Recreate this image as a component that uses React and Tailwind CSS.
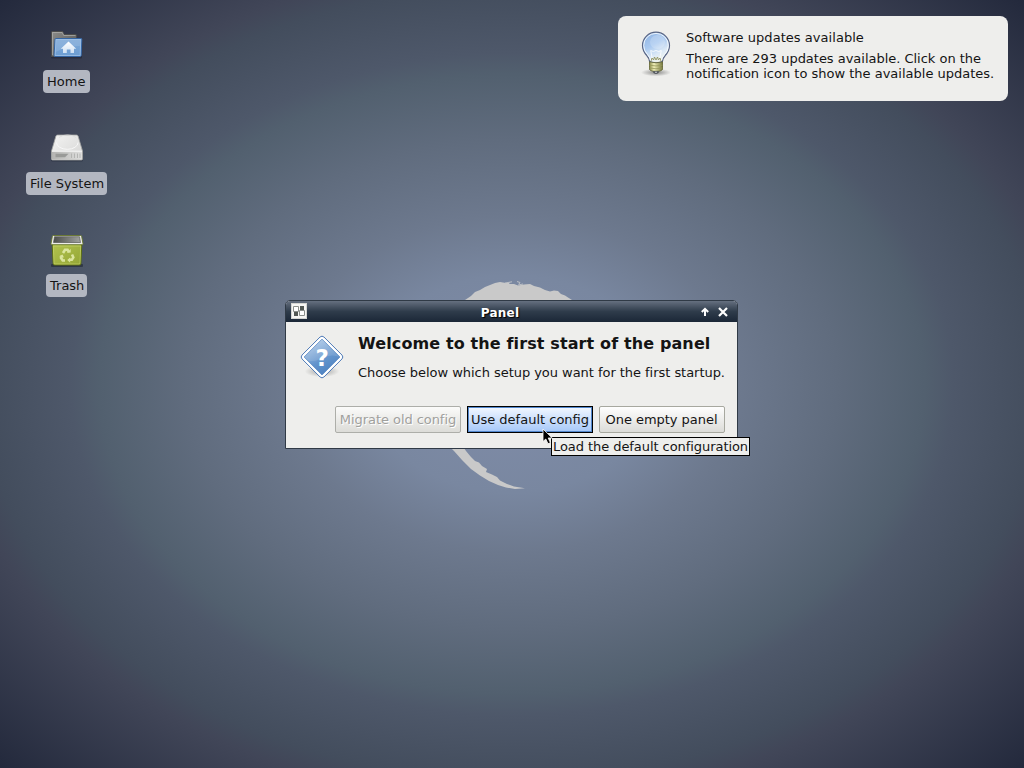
import React from "react";

function HomeIcon() {
  return (
    <svg width="36" height="32" viewBox="0 0 36 32" className="block">
      <defs>
        <linearGradient id="hBack" x1="0" x2="1" y1="0" y2="1">
          <stop offset="0" stopColor="#8c8c8a" />
          <stop offset="1" stopColor="#4f4f4d" />
        </linearGradient>
        <linearGradient id="hFront" x1="0" x2="0" y1="0" y2="1">
          <stop offset="0" stopColor="#7fa9d8" />
          <stop offset="1" stopColor="#6c9dd2" />
        </linearGradient>
        <linearGradient id="hHouse" x1="0" x2="0" y1="0" y2="1">
          <stop offset="0" stopColor="#ffffff" />
          <stop offset="1" stopColor="#cfe0f3" />
        </linearGradient>
      </defs>
      <rect x="2" y="27" width="31" height="2.500" rx="1" fill="#1b2030" opacity=".5" />
      <path d="M2.500 27.500V3.500q0-1 1-1H13q1 0 1.300 1l.8 2h11.400q1 0 1 1v21z" fill="url(#hBack)" stroke="#4c4c4b" />
      <path d="M3.500 26V3.500h9.700l1.500 3h11.800" fill="none" stroke="#b0b0ae" opacity=".7" />
      <path d="M6.800 9.500h25.400q.6 0 .6.700L32.200 26.500q-.1 1-1.200 1H6q-1 0-.9-1L6 10.200q.1-.7.800-.7z" fill="url(#hFront)" stroke="#3566a4" />
      <path d="M7 10.500h24.700L31.200 26.500H6.100z" fill="none" stroke="#b4d0ee" opacity=".55" />
      <path d="M7.500 11h23.700l-.3 6Q16 17 6.800 23z" fill="#fff" opacity=".12" />
      <path d="M19.500 12.500l7.700 7.200h-2.200v4.300h-3.500v-3.500h-3.700v3.500h-3.800v-4.300h-2.200z" fill="url(#hHouse)" />
    </svg>
  );
}

function DriveIcon() {
  return (
    <svg width="36" height="30" viewBox="0 0 36 30" className="block">
      <defs>
        <linearGradient id="dTop" x1="0" x2="1" y1="0" y2="1">
          <stop offset="0" stopColor="#f4f4f3" />
          <stop offset="1" stopColor="#d4d4d3" />
        </linearGradient>
        <linearGradient id="dSide" x1="0" x2="1">
          <stop offset="0" stopColor="#b4b4b2" />
          <stop offset="1" stopColor="#dededd" />
        </linearGradient>
      </defs>
      <rect x="2" y="25.500" width="32" height="3" rx="1.500" fill="#181d2c" opacity=".4" />
      <path d="M8.500 2h19q1.200 0 1.600 1.200L33.500 18v8q0 1-1 1h-29q-1 0-1-1V18L6.900 3.200Q7.300 2 8.500 2z" fill="url(#dTop)" stroke="#a3a4a2" strokeWidth=".8" />
      <path d="M3 18.500h30V25.500q0 1-1 1H4q-1 0-1-1z" fill="url(#dSide)" />
      <path d="M3 18.200h30" stroke="#fff" strokeWidth=".8" />
      <path d="M7.500 9.500a10.800 6.800 0 0 0 21.600 0" fill="none" stroke="#f8f8f8" strokeWidth="1" />
      <path d="M10 4.500a11 7 0 0 1 17 0" fill="none" stroke="#dcdcdb" strokeWidth=".8" />
      <path d="M6.500 20.800h13l-3.500 3.400H6.500z" fill="#999a98" />
      <path d="M22.500 20.500v4.500M25.500 20.500v4.500M28.500 20.500v4.500M31 20.500v4.500" stroke="#b4b5b3" />
    </svg>
  );
}

function TrashIcon() {
  return (
    <svg width="36" height="34" viewBox="0 0 36 34" className="block">
      <defs>
        <linearGradient id="tBody" x1="0" x2="1" y1="0" y2="1">
          <stop offset="0" stopColor="#b3c44f" />
          <stop offset="1" stopColor="#93a535" />
        </linearGradient>
        <linearGradient id="tIn" x1="0" x2="1">
          <stop offset="0" stopColor="#4c4e4c" />
          <stop offset="1" stopColor="#a0a29f" />
        </linearGradient>
      </defs>
      <rect x="2" y="30" width="32" height="3" rx="1" fill="#151b25" opacity=".5" />
      <path d="M3.200 9h29.600l-.9 20.500q-.1 1.500-1.500 1.500H5.600q-1.400 0-1.500-1.500z" fill="url(#tBody)" stroke="#5c6d13" />
      <path d="M4.300 12h27.400l-.7 17q-.1 1-1 1H6q-1 0-1-1z" fill="none" stroke="#cbd86f" opacity=".6" />
      <path d="M4.300 1.500h27.400q.7 0 .9.700l1.400 7.600q.1.900-.8.900H2.800q-1 0-.8-.9l1.400-7.600q.2-.7.900-.7z" fill="#ecece9" stroke="#65752a" strokeWidth=".9" />
      <path d="M5.500 2.700h25l1 5.800H4.500z" fill="url(#tIn)" stroke="#464846" strokeWidth=".6" />
      <g fill="none" stroke="#dbe59e" strokeWidth="2.600">
        <path d="M14 19l2-3.200h2.600l1.200 2" />
        <path d="M23 20.500l1.300 2.800-1.500 2.500h-2.500" />
        <path d="M16 26.500h-2.300l-1.700-2.500.9-1.800" />
      </g>
      <path d="M18 19l3.700-.5V14.800zM21.200 23.500v5.300l-3-2.700zM10 22.200l3.500-1.700 1.500 3z" fill="#dbe59e" />
    </svg>
  );
}

function BulbIcon() {
  return (
    <svg width="36" height="48" viewBox="0 0 36 48" className="block">
      <defs>
        <linearGradient id="bGlass" x1=".1" x2=".6" y1="0" y2="1">
          <stop offset="0" stopColor="#8fb3e2" />
          <stop offset=".45" stopColor="#a9c9f0" />
          <stop offset=".75" stopColor="#dce9f6" />
          <stop offset="1" stopColor="#f2f4ea" />
        </linearGradient>
        <radialGradient id="bShade">
          <stop offset="0" stopColor="#555" stopOpacity=".65" />
          <stop offset="1" stopColor="#555" stopOpacity="0" />
        </radialGradient>
        <linearGradient id="bBase" x1="0" x2="1">
          <stop offset="0" stopColor="#8b8c4c" />
          <stop offset=".35" stopColor="#f0efb8" />
          <stop offset="1" stopColor="#74763c" />
        </linearGradient>
      </defs>
      <ellipse cx="18" cy="42.500" rx="15" ry="3.800" fill="url(#bShade)" />
      <path d="M11.600 31.500q-.2-3-2.800-6Q4.500 21 4.500 15.500a13.500 13.300 0 0 1 27 0q0 5.500-4.300 10-2.600 3-2.800 6-6.400 2.500-12.800 0z" fill="url(#bGlass)" stroke="#5a6685" strokeWidth="1.200" />
      <path d="M12.700 31q-.2-3-3-6.200-4-4.300-4-9.300a12.300 12.100 0 0 1 24.600 0q0 5-4 9.300-2.800 3.200-3 6.200" fill="none" stroke="#f5faff" strokeWidth=".9" />
      <ellipse cx="19.500" cy="12" rx="7.500" ry="7" fill="#fff" opacity=".2" />
      <path d="M14.500 30l-1.800-9.500q2.500 2 5.300 0 2.800 2 5.300 0L21.500 30" fill="none" stroke="#fff" strokeWidth="1" opacity=".8" />
      <path d="M13 31l1-3 1.500 2 1-3 1.500 3 1.500-3 1 3 1.500-2 1 3" fill="none" stroke="#91935f" strokeWidth=".9" />
      <path d="M11.500 31.800q6.500 2 13 0v7.700q-1 1.300-3.500 1.800h-6q-2.500-.5-3.500-1.800z" fill="url(#bBase)" stroke="#5c5e30" strokeWidth=".8" />
      <path d="M11.500 35.200q6.500 1.500 13 0M11.500 38q6.500 1.500 13 0" fill="none" stroke="#96985a" strokeWidth=".8" />
      <path d="M14.800 41.300h6.400q-.5 2.700-3.200 2.700t-3.200-2.700z" fill="#555960" />
      <path d="M17 41.800h2v1h-2z" fill="#c9cdd2" />
    </svg>
  );
}

function QuestionIcon() {
  return (
    <svg width="46" height="46" viewBox="0 0 48 48" className="mx-[1px] block">
      <defs>
        <linearGradient id="qFill" x1=".2" x2=".7" y1="0" y2="1">
          <stop offset="0" stopColor="#b4cdea" />
          <stop offset=".6" stopColor="#6394cc" />
          <stop offset="1" stopColor="#4b80c0" />
        </linearGradient>
        <radialGradient id="qShade">
          <stop offset="0" stopColor="#444" stopOpacity=".45" />
          <stop offset="1" stopColor="#444" stopOpacity="0" />
        </radialGradient>
      </defs>
      <ellipse cx="24" cy="39" rx="18" ry="6" fill="url(#qShade)" />
      <path d="M22 3.100q2-1.700 4 0L44.900 22q1.700 2 0 4L26 44.900q-2 1.700-4 0L3.100 26q-1.700-2 0-4z" fill="#fff" stroke="#4573b3" strokeWidth="1" />
      <path d="M24 5.300L42.700 24 24 42.700 5.300 24z" fill="url(#qFill)" stroke="#4a7cbb" strokeWidth=".7" />
      <path d="M24 5.500L42.500 24Q33 20 22 26 13 30 8.500 27L5.500 24z" fill="#fff" opacity=".12" />
      <text x="24.300" y="33" textAnchor="middle" fontFamily="DejaVu Sans" fontWeight="700" fontSize="24" fill="#fff">?</text>
    </svg>
  );
}

function PanelIcon() {
  return (
    <svg width="16" height="16" viewBox="0 0 16 16" className="block">
      <rect x=".5" y=".5" width="15" height="15" fill="#f6f6f4" stroke="#d5d6d3" />
      <path d="M9 3h4v4H9z" fill="#525854" />
      <path d="M3 9h4v4H3z" fill="#525854" />
      <path d="M2.500 3.500h5v5h-5zM8.500 7.500h5v5h-5z" fill="#fff" stroke="#8b8f8b" />
    </svg>
  );
}

function Wallpaper() {
  return (
    <svg width="1024" height="768" viewBox="0 0 1024 768" className="absolute inset-0">
      <path d="M460 305L465 300 471 296 475 292 480 290 485 287 490 285 495 283 500 282 506 283 510 282.500 509 284 514 284 518 285.500 524 284.500 530 284 534 286 540 287.500 545 290 550 291.500 554 290.500 558 291 561 294 565 295.500 568 297.500 572 300 577 305z" fill="#c9c9c9" />
      <path d="M505 283l7-1.200M517 281.500l3 1-1 1.500M518 285l5-1" stroke="#c3c5c8" strokeWidth=".9" fill="none" />
      <path d="M448 445H462L466 451 471 457 475 461 479 462.500 482 466 487 469 486 472 492 474.500 497 477 500 480.500 507 484 514 486.500 525 488.300 515 489 506 487.500 498 485 489 481 480 475.500 471 469 462 460 454 451z" fill="#c9c9c9" />
    </svg>
  );
}

function DesktopItem({ icon, label, iconClass, labelClass }) {
  return (
    <div className="flex h-[102px] w-[134px] flex-col items-center">
      <div className={"flex items-end " + iconClass}>{icon}</div>
      <div className={"mt-auto mb-[9px] flex h-[23px] items-center rounded-[4px] bg-[#b3b7c1] pl-1 whitespace-nowrap " + labelClass}>
        {label}
      </div>
    </div>
  );
}

const buttonBase = "flex h-[27px] w-[126px] items-center justify-center border whitespace-nowrap";

export default function App() {
  return (
    <div className="relative h-[768px] w-[1024px] overflow-hidden bg-[radial-gradient(724px_543px_at_512px_384px,#818daa_0%,#7987a0_20%,#6d798e_31%,#606c7e_45%,#52606f_57%,#4e586a_61%,#434d5d_73%,#414658_77%,#23293c_100%)] font-['DejaVu_Sans',sans-serif] text-[13px] text-[#141414]">
      <Wallpaper />

      <div className="absolute top-0 left-0 flex flex-col">
        <DesktopItem icon={<HomeIcon />} label="Home" iconClass="h-[61px]" labelClass="mr-[1px] w-[47px]" />
        <DesktopItem icon={<DriveIcon />} label="File System" iconClass="h-[61px]" labelClass="mr-[1px] w-[81px] tracking-[-0.03px]" />
        <DesktopItem icon={<TrashIcon />} label="Trash" iconClass="h-[64px]" labelClass="mr-[1px] w-[41px]" />
      </div>

      <div className="absolute top-4 left-[618px] flex h-[85px] w-[390px] rounded-[8px] bg-[#eeeeec] pt-[14px] pl-5">
        <BulbIcon />
        <div className="ml-3 flex flex-col leading-[15px] whitespace-nowrap">
          <p className="tracking-[0.04px]">Software updates available</p>
          <p className="mt-[6px] tracking-[-0.02px]">There are 293 updates available. Click on the</p>
          <p>notification icon to show the available updates.</p>
        </div>
      </div>

      <div className="absolute top-[300px] left-[285px] flex h-[149px] w-[453px] flex-col rounded-t-[5px] border border-[#303a46] bg-[#eeeeec]">
        <div className="flex h-[21px] shrink-0 items-center rounded-t-[4px] bg-gradient-to-b from-[#667080] via-[#2f3c4b] via-50% to-[#1b2737] pr-[9px] pl-[5px]">
          <div className="pb-[2px]">
            <PanelIcon />
          </div>
          <div className="flex-1 pt-[3px] pr-[7px] text-center text-[12px] leading-[18px] font-bold tracking-[0.25px] text-white [text-shadow:1px_1px_1px_#000]">Panel</div>
          <svg width="28" height="12" viewBox="0 0 28 12" className="block">
            <path d="M5 10V4M1.800 6L5 2.800 8.200 6" fill="none" stroke="#fff" strokeWidth="2" />
            <path d="M19 2l8 8M27 2l-8 8" stroke="#fff" strokeWidth="2.200" />
          </svg>
        </div>
        <div className="flex pt-[9px] pl-3">
          <div className="pt-[3px]">
            <QuestionIcon />
          </div>
          <div className="ml-3 flex flex-col whitespace-nowrap">
            <h1 className="text-[16px] leading-[26px] font-bold tracking-[0.12px]">Welcome to the first start of the panel</h1>
            <p className="mt-[8px] leading-[16px] tracking-[-0.04px]">Choose below which setup you want for the first startup.</p>
          </div>
        </div>
        <div className="mt-auto mr-3 mb-[15px] flex justify-end gap-[6px]">
          <div className={buttonBase + " rounded-[2px] border-[#adaea9] bg-gradient-to-b from-[#fbfbfa] to-[#dcdcd8] tracking-[-0.06px] text-[#a0a09d] [text-shadow:1px_1px_0_#fff]"}>
            Migrate old config
          </div>
          <div className={buttonBase + " border-black bg-gradient-to-b from-[#f3f8ff] to-[#a5c7f8] shadow-[inset_0_0_0_1px_#5287cd]"}>
            Use default config
          </div>
          <div className={buttonBase + " rounded-[2px] border-[#a7a89f] bg-gradient-to-b from-[#fefefe] to-[#dcdcd8] pr-[1px] tracking-[-0.03px]"}>
            One empty panel
          </div>
        </div>
      </div>

      <div className="absolute top-[437px] left-[551px] flex h-[19px] w-[199px] items-center justify-center border border-black bg-[#eeeeec] tracking-[-0.06px] whitespace-nowrap">
        Load the default configuration
      </div>

      <svg width="12" height="18" viewBox="0 0 12 18" className="absolute top-[428px] left-[542px]">
        <path d="M1 1v12.500l2.800-2.500 2.200 4.700 2.400-1-2.200-4.700h4z" fill="#000" stroke="#fff" strokeWidth=".8" />
      </svg>
    </div>
  );
}
